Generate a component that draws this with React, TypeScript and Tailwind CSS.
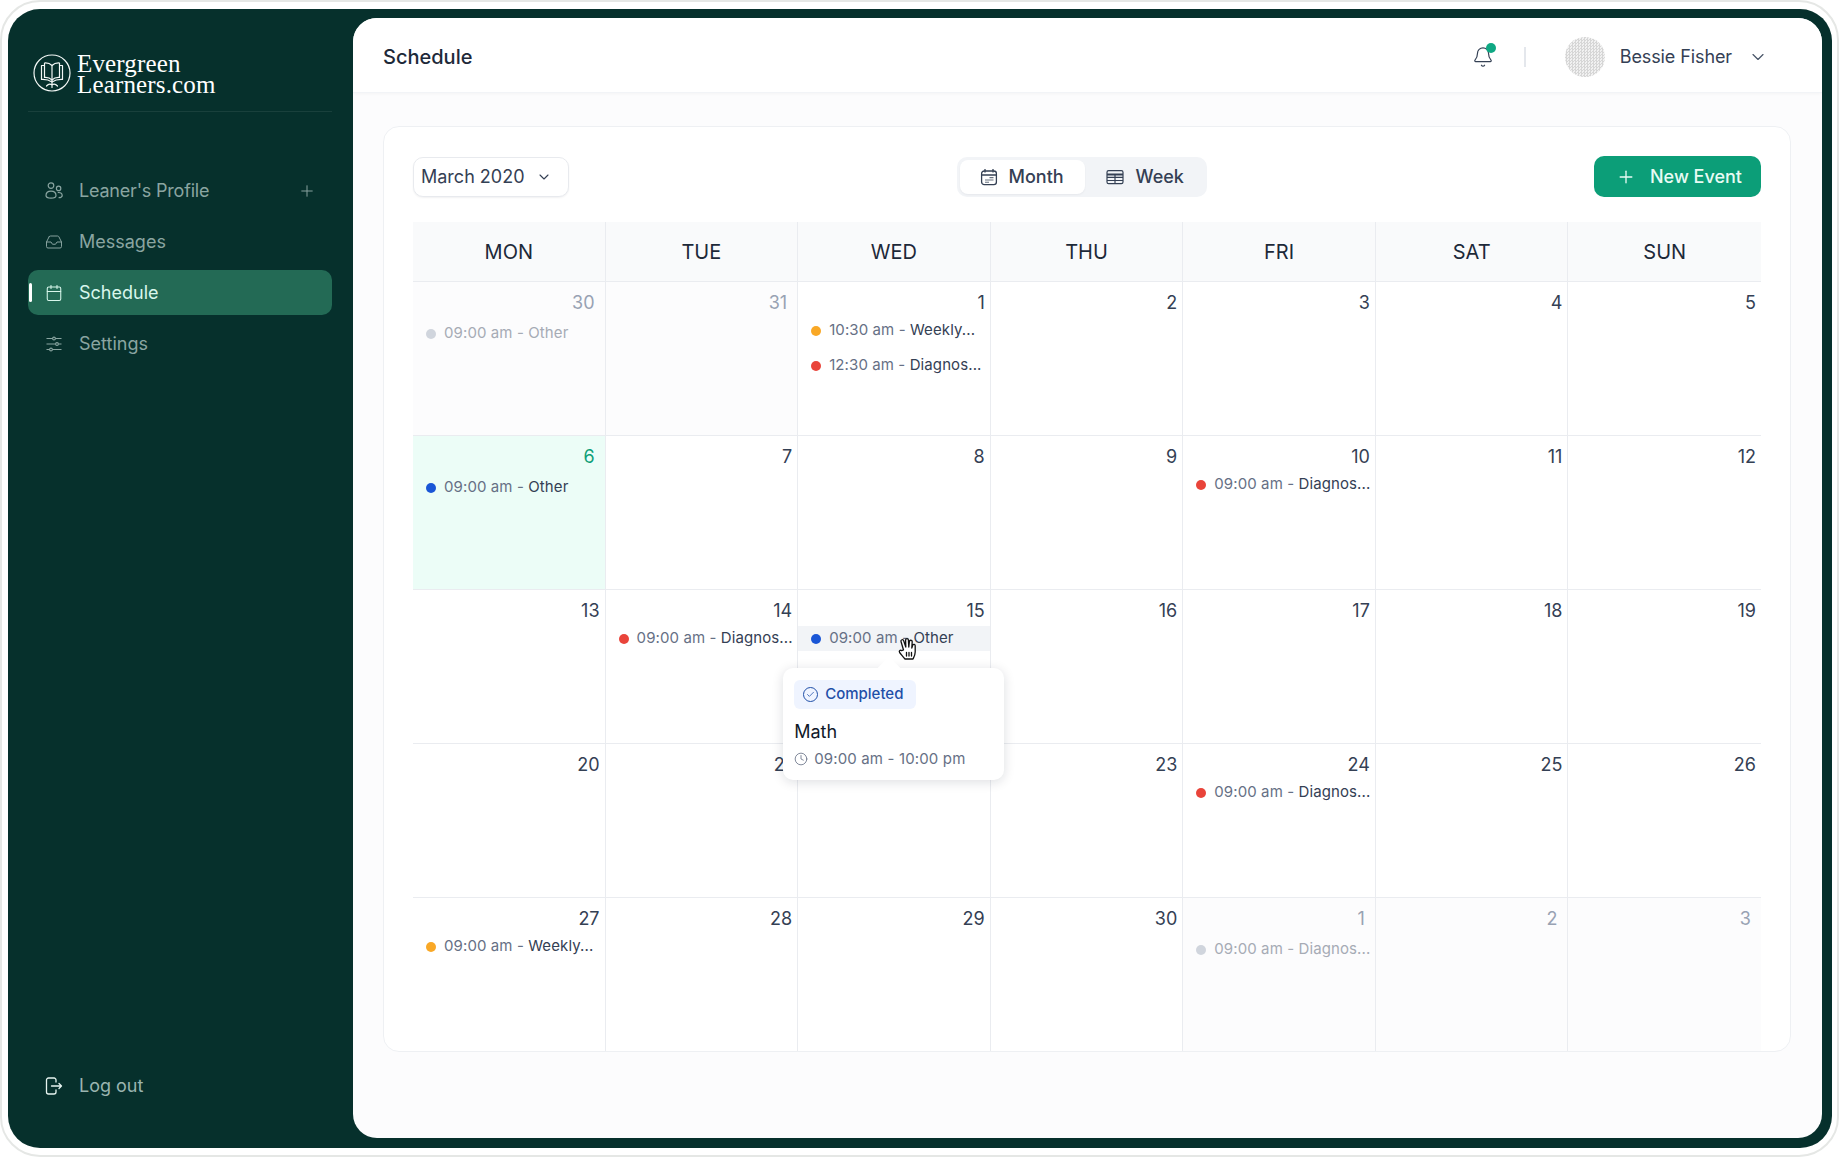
import { Bell, Calendar, Check, ChevronDown, Clock, Inbox, Plus } from "lucide-react";

type Ev = { time: string; title: string; dot: string };

type Day = { n: number; muted?: boolean; today?: boolean; events?: Ev[]; hover?: boolean };

const RED = "bg-[#e9443a]";
const BLUE = "bg-[#1a56d6]";
const AMBER = "bg-[#f9a826]";
const GREY = "bg-[#d0d5dd]";

const DAYS: Day[] = [
  { n: 30, muted: true, events: [{ time: "09:00 am", title: "Other", dot: GREY }] },
  { n: 31, muted: true },
  {
    n: 1,
    events: [
      { time: "10:30 am", title: "Weekly...", dot: AMBER },
      { time: "12:30 am", title: "Diagnos...", dot: RED },
    ],
  },
  { n: 2 }, { n: 3 }, { n: 4 }, { n: 5 },
  { n: 6, today: true, events: [{ time: "09:00 am", title: "Other", dot: BLUE }] },
  { n: 7 }, { n: 8 }, { n: 9 },
  { n: 10, events: [{ time: "09:00 am", title: "Diagnos...", dot: RED }] },
  { n: 11 }, { n: 12 },
  { n: 13 },
  { n: 14, events: [{ time: "09:00 am", title: "Diagnos...", dot: RED }] },
  { n: 15, hover: true, events: [{ time: "09:00 am", title: "Other", dot: BLUE }] },
  { n: 16 }, { n: 17 }, { n: 18 }, { n: 19 },
  { n: 20 }, { n: 21 }, { n: 22 }, { n: 23 },
  { n: 24, events: [{ time: "09:00 am", title: "Diagnos...", dot: RED }] },
  { n: 25 }, { n: 26 },
  { n: 27, events: [{ time: "09:00 am", title: "Weekly...", dot: AMBER }] },
  { n: 28 }, { n: 29 }, { n: 30 },
  { n: 1, muted: true, events: [{ time: "09:00 am", title: "Diagnos...", dot: GREY }] },
  { n: 2, muted: true }, { n: 3, muted: true },
];

const WEEKDAYS = ["MON", "TUE", "WED", "THU", "FRI", "SAT", "SUN"];

function LogoMark() {
  return (
    <svg width="38" height="38" viewBox="0 0 38 38" fill="none" stroke="#f2f7f5" strokeWidth="1.2" strokeLinejoin="round" strokeLinecap="round" className="shrink-0">
      <circle cx="19" cy="19" r="18" />
      <path d="M19 11.5C17 9.5 14 8.8 11.5 9V23.5C14 23.3 17 24 19 26C21 24 24 23.3 26.5 23.5V9C24 8.8 21 9.5 19 11.5Z" />
      <path d="M11.5 11.5H8.5V25.5C12 25.3 16 26 19 28C22 26 26 25.3 29.5 25.5V11.5H26.5" />
      <path d="M19 11.5V33.5M13.5 32C15.5 29.8 17.5 29.8 19 31C20.5 29.8 22.5 29.8 24.5 32" />
    </svg>
  );
}

function ProfileIcon() {
  return (
    <svg width="18" height="18" viewBox="0 0 18 18" fill="none" stroke="currentColor" strokeWidth="1.2" className="shrink-0">
      <circle cx="6" cy="3.6" r="2.8" />
      <circle cx="13.6" cy="6.4" r="2.2" />
      <path d="M1 13.6c0-2.8 2.2-4.4 5-4.4s5 1.6 5 4.4c0 1.5-2.2 2.6-5 2.6s-5-1.1-5-2.6Z" />
      <path d="M12.8 10.6c2.4-.4 4.4.8 4.4 2.8 0 1.3-1.4 2.2-3.6 2.3" />
    </svg>
  );
}

function SettingsIcon() {
  return (
    <svg width="18" height="18" viewBox="0 0 18 18" fill="none" stroke="currentColor" strokeWidth="1.1" className="shrink-0">
      <path d="M1.5 3.5H7.5M10.5 3.5H16.5M1.5 9H10.5M13.5 9H16.5M1.5 14.5H4.5M7.5 14.5H16.5" />
      <circle cx="9" cy="3.5" r="1.4" />
      <circle cx="12" cy="9" r="1.4" />
      <circle cx="6" cy="14.5" r="1.4" />
    </svg>
  );
}

function MonthIcon() {
  return (
    <svg width="18" height="18" viewBox="0 0 18 18" fill="none" stroke="currentColor" strokeWidth="1.3" className="shrink-0">
      <rect x="1.6" y="3" width="14.8" height="13.6" rx="2.6" />
      <path d="M5 1V4.4M13 1V4.4M1.6 7H16.4" />
      <path d="M9.5 9.6H13.5M5 12H13.5M5 14.2H9" strokeWidth="1.1" opacity="0.75" />
    </svg>
  );
}

function WeekIcon() {
  return (
    <svg width="18" height="18" viewBox="0 0 18 18" fill="none" stroke="currentColor" strokeWidth="1.2" className="shrink-0">
      <rect x="1" y="2.6" width="16" height="13" rx="1.6" />
      <path d="M1 6.4H17" strokeWidth="2" />
      <path d="M1 9.4H17M1 12.5H17M9 6.4V15.6" />
    </svg>
  );
}

function LogoutIcon() {
  return (
    <svg width="18" height="18" viewBox="0 0 18 18" fill="none" stroke="#e6f4f0" strokeWidth="1.3" strokeLinecap="round" strokeLinejoin="round" className="shrink-0">
      <path d="M11 5V3a2 2 0 0 0-2-2H3.5a2 2 0 0 0-2 2v12a2 2 0 0 0 2 2H9a2 2 0 0 0 2-2v-2" />
      <path d="M6.5 9H16.5M14 6.5 16.5 9 14 11.5" />
    </svg>
  );
}

function HandCursor() {
  return (
    <svg width="20" height="24" viewBox="0 0 20 24" fill="#fff" stroke="#111" strokeWidth="1.3" strokeLinejoin="round" strokeLinecap="round">
      <path d="M6.5 13 4 4.5a1.4 1.4 0 0 1 2.7-.8L8.8 10 8.6 3a1.4 1.4 0 0 1 2.8 0l.4 7 .6-5.5a1.4 1.4 0 0 1 2.8.3l-.4 6.2 1-3a1.3 1.3 0 0 1 2.4.7V15c0 3-1.2 5-2.2 7H8c-1.5-1.6-3.3-4-5.4-6.5-1-1.6.8-3 2-1.8Z" />
      <path d="M9.5 15.5V19M12 15.5V19M14.5 15.5V19" fill="none" />
    </svg>
  );
}

function NavItem({ icon, label, active, trailing }: { icon: React.ReactNode; label: string; active?: boolean; trailing?: React.ReactNode }) {
  return (
    <div className={`relative flex h-[45px] items-center gap-[16px] rounded-[10px] pl-[17px] pr-[16px] text-[18px] ${active ? "bg-[#236a55] text-[#d9f7ec]" : "text-[#8aa5a1]"}`}>
      {active && <span className="absolute left-[1px] top-[13px] h-[19px] w-[3px] rounded-full bg-white" />}
      {icon}
      <span className={trailing ? "tracking-[-0.2px]" : ""}>{label}</span>
      {trailing && <span className="ml-auto">{trailing}</span>}
    </div>
  );
}

function Sidebar() {
  return (
    <aside className="flex w-[345px] shrink-0 flex-col pb-[30px] pl-[20px] pr-[21px] pt-[36px]">
      <div className="flex h-[58px] items-start gap-[6px] border-b border-[#ffffff14] pl-[5px]">
        <LogoMark />
        <div className="-mt-[1px] font-['Liberation_Serif',serif] text-[25px] leading-[21px] text-white tracking-[0.15px]">
          <div>Evergreen</div>
          <div>Learners.com</div>
        </div>
      </div>
      <nav className="mt-[56px] flex flex-col gap-[6px]">
        <NavItem icon={<ProfileIcon />} label="Leaner's Profile" trailing={<Plus size={18} strokeWidth={1.3} />} />
        <NavItem icon={<Inbox size={18} strokeWidth={1.3} />} label="Messages" />
        <NavItem active icon={<Calendar size={18} strokeWidth={1.4} />} label="Schedule" />
        <NavItem icon={<SettingsIcon />} label="Settings" />
      </nav>
      <div className="mt-auto flex h-[45px] items-center gap-[16px] pl-[17px] text-[18px] text-[#9ab5b0]">
        <LogoutIcon />
        <span>Log out</span>
      </div>
    </aside>
  );
}

function Header() {
  return (
    <header className="flex h-[75px] shrink-0 items-center justify-between border-b border-[#f2f4f7] bg-white pl-[30px] pr-[54px] pt-[3px] shadow-[0_1px_3px_rgba(16,24,40,0.03)]">
      <h1 className="text-[20px] font-medium text-[#1d2939]">Schedule</h1>
      <div className="flex items-center">
        <div className="relative text-[#344054]">
          <Bell size={22} strokeWidth={1.3} />
          <span className="absolute -right-[2px] -top-[3px] h-[10px] w-[10px] rounded-full bg-[#0fa883]" />
        </div>
        <span className="ml-[30px] h-[20px] w-[2px] bg-[#e4e7ec]" />
        <span className="ml-[39px] h-[40px] w-[40px] rounded-full bg-[repeating-conic-gradient(#d6d6d6_0_25%,#f1f1f1_0_50%)] bg-size-[3px_3px]" />
        <span className="ml-[15px] text-[18px] tracking-[-0.1px] text-[#344054]">Bessie Fisher</span>
        <ChevronDown size={20} strokeWidth={1.4} className="ml-[16px] text-[#475467]" />
      </div>
    </header>
  );
}

function Toolbar() {
  return (
    <div className="flex items-center justify-between">
      <button className="flex h-[40px] w-[156px] items-center rounded-[10px] border border-[#e8eaee] bg-white pl-[7px] text-[18px] text-[#344054] shadow-[0_1px_2px_rgba(16,24,40,0.06)]">
        March 2020
        <ChevronDown size={16} strokeWidth={1.6} className="ml-[11px]" />
      </button>
      <div className="flex h-[40px] w-[250px] items-center rounded-[10px] bg-[#f2f4f7] p-[3px] text-[18px] font-medium text-[#344054]">
        <div className="flex h-[34px] w-[125px] items-center gap-[11px] rounded-[8px] bg-white pl-[20px] shadow-[0_1px_2px_rgba(16,24,40,0.05)]">
          <MonthIcon />
          Month
        </div>
        <div className="flex h-[34px] items-center gap-[12px] pl-[21px]">
          <WeekIcon />
          Week
        </div>
      </div>
      <button className="flex h-[41px] w-[167px] items-center gap-[14px] rounded-[10px] bg-[#0c9e78] pl-[22px] text-[18px] font-medium text-[#e8fbf4]">
        <Plus size={20} strokeWidth={1.6} />
        New Event
      </button>
    </div>
  );
}

function EventRow({ ev, muted, hover }: { ev: Ev; muted?: boolean; hover?: boolean }) {
  return (
    <div className={`flex h-[25px] items-center gap-[8px] whitespace-nowrap pl-[13px] text-[15px] tracking-[0.1px] ${hover ? "bg-[#f2f4f7]" : ""}`}>
      <span className={`h-[10px] w-[10px] shrink-0 rounded-full ${ev.dot}`} />
      <span className={muted ? "text-[#a6abb5]" : "text-[#667085]"}>
        {ev.time} - <span className={muted ? "" : "text-[#344054]"}>{ev.title}</span>
      </span>
    </div>
  );
}

function EventPopover() {
  return (
    <div className="absolute left-[-15px] top-[78px] z-10 h-[112px] w-[221px] rounded-[10px] bg-white px-[11px] pt-[12px] shadow-[0_2px_12px_rgba(16,24,40,0.14)]">
      <span className="absolute left-[98px] top-[-8px] h-[16px] w-[16px] rotate-45 bg-white" />
      <div className="relative flex h-[29px] w-[122px] items-center gap-[7px] rounded-[6px] bg-[#eff4ff] pl-[9px] text-[15px] font-medium text-[#1f4fa8]">
        <span className="flex h-[15px] w-[15px] items-center justify-center rounded-full border border-[#1f4fa8]">
          <Check size={9} strokeWidth={2} />
        </span>
        Completed
      </div>
      <div className="mt-[9px] text-[18px] leading-[28px] text-[#101828]">Math</div>
      <div className="mt-[2px] flex items-center gap-[6px] text-[15px] tracking-[0.15px] text-[#667085]">
        <Clock size={14} strokeWidth={1.4} />
        09:00 am - 10:00 pm
      </div>
    </div>
  );
}

function DayCell({ day, col }: { day: Day; col: number }) {
  const bg = day.today ? "bg-[#ecfdf7]" : day.muted ? "bg-[#fcfcfd]" : "bg-white";
  const colour = day.today ? "text-[#0e9f78]" : day.muted ? "text-[#98a2b3]" : "text-[#344054]";
  const padded = day.today || day.muted;
  return (
    <div className={`relative h-[154px] border-t border-[#eaecf0] ${col < 6 ? "border-r" : ""} ${bg}`}>
      <div className={`pt-[8px] text-right text-[18px] leading-[26px] ${padded ? "pr-[10px]" : "pr-[5px]"} ${colour}`}>{day.n}</div>
      <div className={`flex flex-col gap-[10px] ${padded ? "mt-[5px]" : "mt-[2px]"}`}>
        {day.events?.map((ev) => (
          <EventRow key={ev.time + ev.title} ev={ev} muted={day.muted} hover={day.hover} />
        ))}
      </div>
      {day.hover && (
        <>
          <EventPopover />
          <div className="absolute left-[99px] top-[47px] z-20">
            <HandCursor />
          </div>
        </>
      )}
    </div>
  );
}

function CalendarGrid() {
  return (
    <div className="mt-[25px] grid grid-cols-7">
      {WEEKDAYS.map((d, i) => (
        <div key={d} className={`flex h-[59px] items-center justify-center border-[#eaecf0] bg-[#f9fafb] pt-[1px] text-[20px] text-[#1d2939] ${i < 6 ? "border-r" : ""}`}>
          {d}
        </div>
      ))}
      {DAYS.map((day, i) => (
        <DayCell key={i} day={day} col={i % 7} />
      ))}
    </div>
  );
}

export default function App() {
  return (
    <div className="h-[1158px] w-[1840px] bg-white font-[Inter,sans-serif]">
      <div className="h-[1157px] w-[1839px] rounded-[40px] border-2 border-[#e5e7e5] bg-white pb-[7px] pl-[6px] pr-[5px] pt-[7px]">
        <div className="flex h-full overflow-hidden rounded-[32px] bg-[#06302c] pb-[10px] pr-[10px] pt-[9px]">
          <Sidebar />
          <main className="flex min-w-0 flex-1 flex-col overflow-hidden rounded-[24px] bg-[#fcfcfd]">
            <Header />
            <section className="ml-[30px] mr-[31px] mt-[33px] h-[926px] rounded-[16px] border border-[#eef0f3] bg-white px-[29px] pt-[29px]">
              <Toolbar />
              <CalendarGrid />
            </section>
          </main>
        </div>
      </div>
    </div>
  );
}
